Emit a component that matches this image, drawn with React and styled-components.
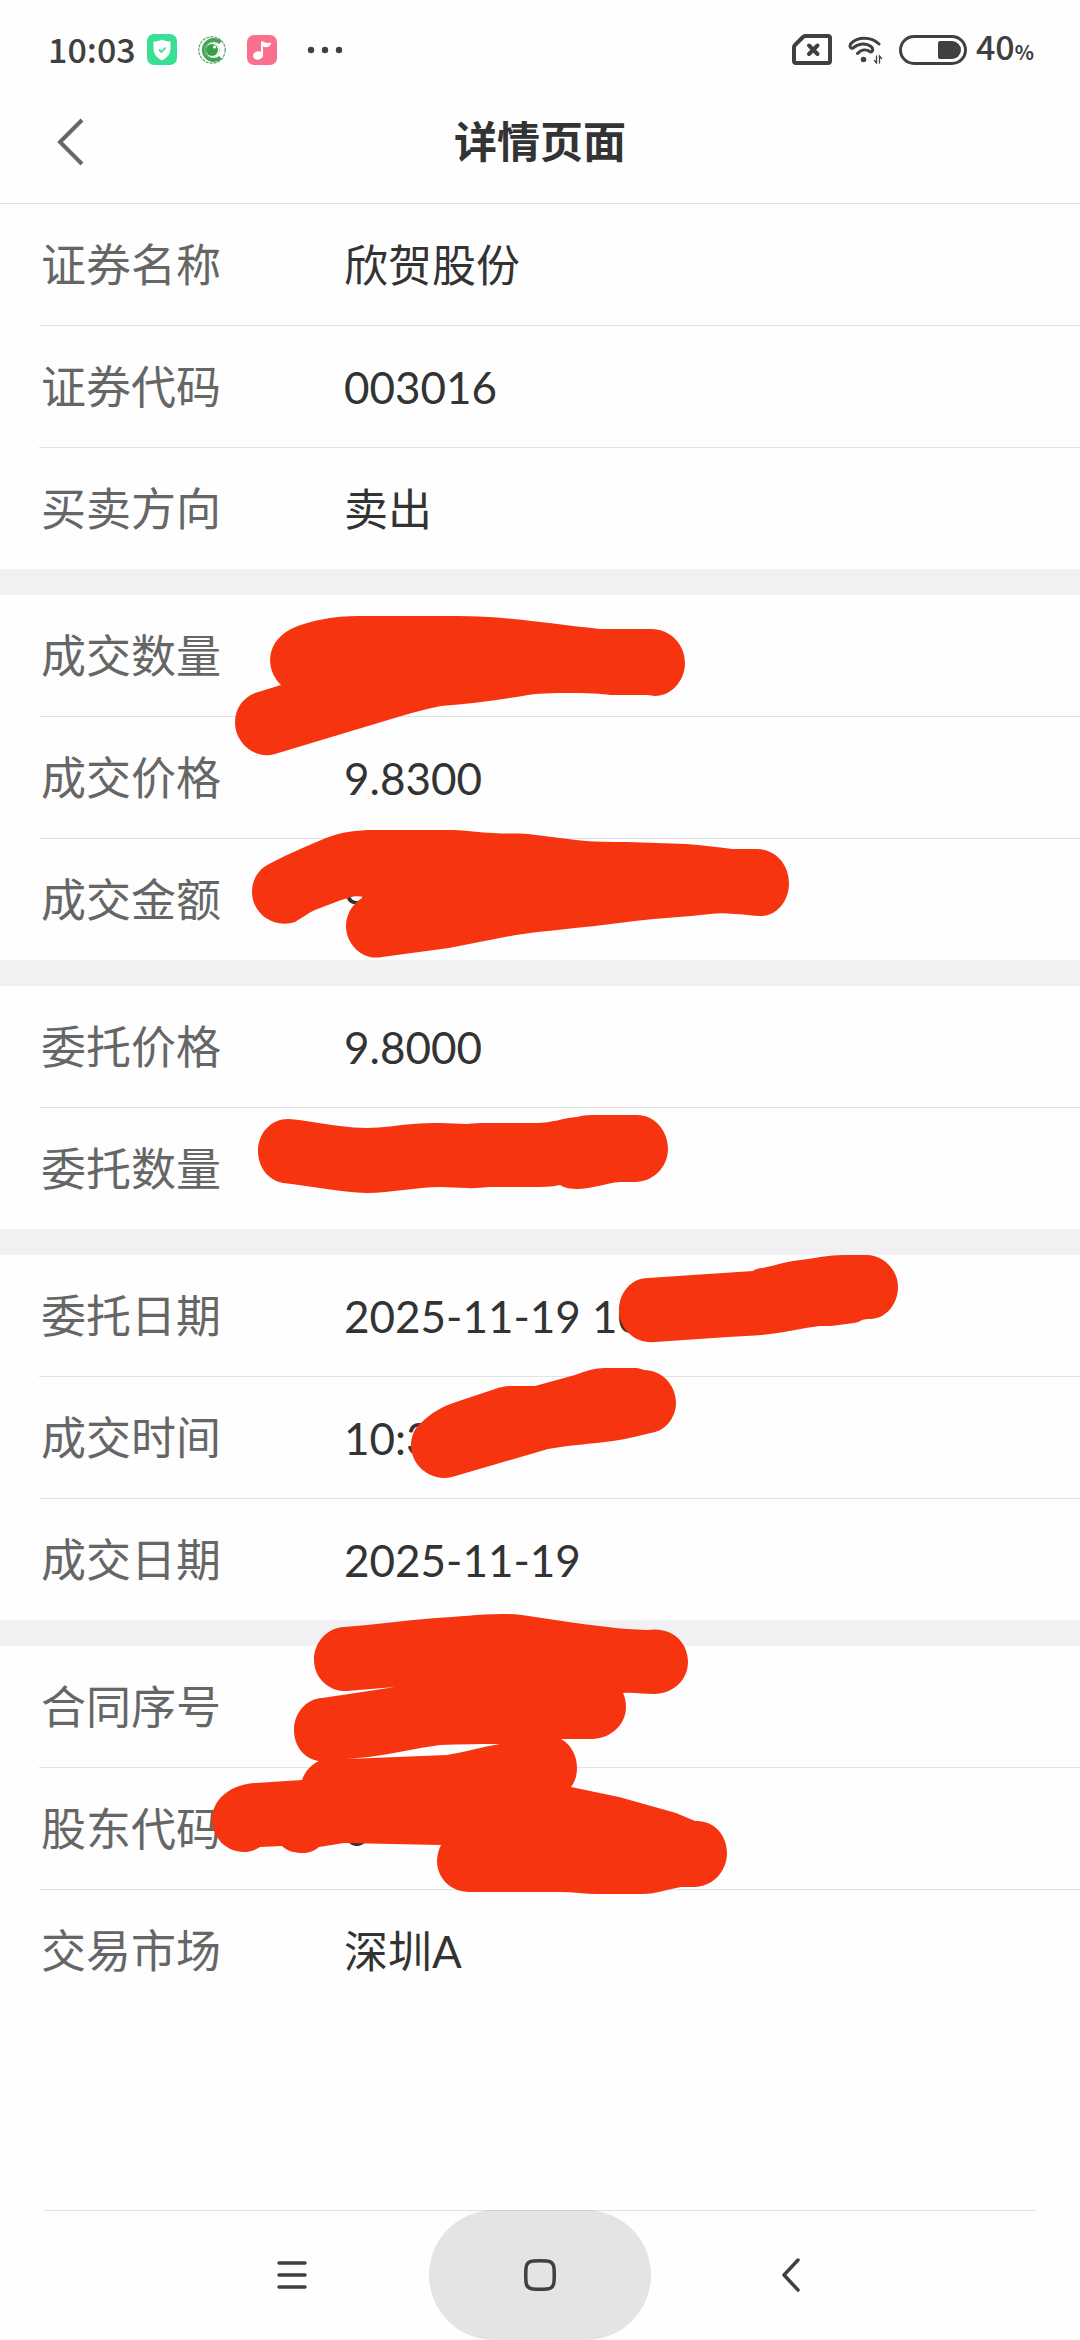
import React from "react";
import styled, { createGlobalStyle } from "styled-components";

const GlobalStyle = createGlobalStyle`
  * {
    box-sizing: border-box;
  }

  body {
    margin: 0;
    background: #fefefe;
    color: #333;
    font-family: Lato, "Noto Sans CJK SC", sans-serif;
  }

  button {
    border: none;
    background: none;
    padding: 0;
    color: inherit;
  }

  svg {
    display: block;
  }
`;

const Page = styled.div`
  min-height: 100vh;
  display: flex;
  flex-direction: column;
`;

const StatusBar = styled.div`
  height: 81px;
  padding: 18px 46px 0 48px;
  display: flex;
  align-items: center;
  justify-content: space-between;
  color: #404040;
`;

const StatusGroup = styled.div`
  display: flex;
  align-items: center;
  gap: ${(props) => props.$gap}px;
`;

const StatusText = styled.span`
  padding-bottom: 2px;
  font-family: "Noto Sans CJK SC", sans-serif;
  font-size: 34px;
  line-height: 40px;
  font-weight: 500;

  small {
    font-size: 20px;
    font-weight: 700;
  }
`;

const TitleBar = styled.header`
  height: 123px;
  padding: 0 42px;
  display: grid;
  grid-template-columns: 60px 1fr 60px;
  align-items: center;
  border-bottom: 1px solid #e2e2e2;

  h1 {
    margin: 0;
    font-size: 43px;
    line-height: 60px;
    font-weight: 700;
    text-align: center;
  }
`;

const BackButton = styled.button`
  width: 60px;
  height: 80px;
  display: flex;
  align-items: center;
  padding-left: 14px;
  color: #666;
`;

const Details = styled.main`
  position: relative;
`;

const Group = styled.dl`
  margin: 0;

  & + & {
    border-top: 26px solid #f1f1f4;
  }
`;

const Row = styled.div`
  height: 122px;
  margin-left: 39px;
  display: flex;
  align-items: center;
  border-bottom: 1px solid #e2e2e2;

  &:last-child {
    height: 121px;
    border-bottom: none;
  }

  dt {
    width: 305px;
    padding-left: 2px;
    font-size: 45px;
    line-height: 60px;
    color: #666;
  }

  dd {
    margin: 0;
    font-size: 44px;
    line-height: 60px;
  }
`;

// red marker strokes lying over the private values
const Marker = styled.svg`
  position: absolute;
  top: 0;
  left: 0;
  fill: #f63410;
  pointer-events: none;
`;

const NavBar = styled.nav`
  height: 130px;
  margin: auto 44px 0;
  display: flex;
  justify-content: center;
  gap: 26px;
  box-shadow: inset 0 1px #e2e2e2;
`;

const NavButton = styled.button`
  width: 222px;
  height: 130px;
  border-radius: 65px;
  display: flex;
  align-items: center;
  justify-content: center;
  color: #404040;
  background: ${(props) => (props.$active ? "rgba(0, 0, 0, 0.1)" : "none")};
`;

const groups = [
  [
    ["证券名称", "欣贺股份"],
    ["证券代码", "003016"],
    ["买卖方向", "卖出"],
  ],
  [
    ["成交数量", ""],
    ["成交价格", "9.8300"],
    ["成交金额", "9"],
  ],
  [
    ["委托价格", "9.8000"],
    ["委托数量", ""],
  ],
  [
    ["委托日期", "2025-11-19 10"],
    ["成交时间", "10:3"],
    ["成交日期", "2025-11-19"],
  ],
  [
    ["合同序号", ""],
    ["股东代码", "0"],
    ["交易市场", "深圳A"],
  ],
];

const strokes = [
  "M281 685C266 671 264 643 291 629C310 620 335 616 358 616H457C505 616 545 623 600 629H651C671 629 685 645 685 663C685 681 671 696 655 696L647 695H610C598 693 548 692 528 695C500 700 470 704 441 706C425 709 412 713 398 717L275 754C254 760 235 742 235 723C235 708 243 698 255 693Z",
  "M252 892C252 879 259 869 269 864C288 854 307 846 326 838C341 832 357 830 374 830H453C466 830 480 833 493 833C505 834 516 833 528 834L576 840C593 842 610 842 627 842C647 843 667 843 686 844C702 845 717 847 732 849H757C776 849 789 865 789 883C789 902 776 916 761 916C752 916 743 914 734 914C726 913 718 913 710 914C685 917 660 918 635 921L595 926C568 929 542 931 516 935C494 939 471 944 449 948L382 957C362 961 346 944 346 926C346 913 354 902 364 897C358 896 353 896 348 898C337 901 326 906 315 910C308 913 302 918 295 922C273 929 252 913 252 892Z",
  "M288 1119C305 1120 323 1124 340 1126C349 1127 358 1128 367 1128C382 1128 398 1125 413 1124C422 1123 431 1123 440 1123C449 1123 458 1124 467 1124C474 1123 480 1123 487 1123H537C551 1123 564 1118 577 1117C584 1115 590 1115 597 1115H637C655 1115 668 1131 668 1149C668 1167 653 1182 635 1182H620C606 1183 592 1189 577 1189C571 1189 565 1188 560 1185C551 1187 542 1187 533 1187H490C482 1187 475 1189 467 1188C458 1188 449 1187 440 1187C416 1187 391 1193 367 1193C339 1192 311 1186 283 1183C268 1180 258 1167 258 1151C258 1132 272 1119 288 1119Z",
  "M619 1310C619 1293 631 1278 648 1278L753 1271C755 1269 759 1268 763 1268C776 1265 788 1261 801 1260C815 1258 829 1255 843 1255H866C884 1255 898 1270 898 1287C898 1304 886 1319 870 1319C867 1319 865 1319 862 1320C859 1322 857 1322 854 1323L831 1326H820C803 1328 787 1332 770 1334C756 1336 742 1336 728 1337L655 1342C634 1344 619 1328 619 1310Z",
  "M411 1445C411 1436 415 1427 422 1422C431 1413 443 1406 456 1402L495 1389C501 1387 507 1386 514 1386H535L575 1375C585 1371 595 1368 605 1368H636C639 1368 641 1369 644 1370C662 1370 676 1385 676 1403C676 1416 667 1429 655 1432C641 1435 627 1439 613 1441C591 1444 569 1445 548 1449L452 1477C430 1482 411 1465 411 1445Z",
  "M314 1660C314 1642 327 1628 344 1627C375 1625 406 1620 436 1618C458 1617 479 1614 501 1614C508 1614 515 1614 522 1615C551 1619 579 1624 608 1627C621 1629 634 1629 647 1630C672 1626 688 1642 688 1662C688 1680 673 1694 654 1694C644 1694 633 1692 623 1693C625 1697 626 1702 626 1707C626 1725 610 1739 592 1739H561C571 1744 577 1756 577 1768C577 1775 575 1782 571 1787L619 1797L676 1813L695 1821C714 1820 727 1835 727 1853C727 1872 712 1887 694 1887H681C668 1889 657 1894 642 1894H597C585 1894 573 1892 561 1892H469C451 1892 437 1878 437 1861C437 1855 439 1849 441 1845L344 1843L319 1847C314 1851 309 1853 302 1853C295 1853 287 1851 282 1846L260 1847C255 1850 250 1852 244 1852C226 1852 212 1837 212 1820C212 1799 231 1784 256 1783L302 1780C305 1771 312 1764 319 1761C304 1759 294 1746 294 1730C294 1713 306 1699 322 1698C347 1694 371 1691 395 1687L347 1691C329 1692 314 1678 314 1660ZM347 1759L447 1755C465 1752 482 1747 500 1744C480 1744 460 1744 440 1745C416 1748 393 1754 369 1757Z",
];

function StatusLeftIcons() {
  return (
    <>
      <svg width="30" height="31" viewBox="0 0 30 31">
        <rect width="30" height="31" rx="7" fill="#39df94" />
        <path d="M15 5.500c2.500 1.500 5.500 2 8.500 2v7c0 5.500-3.500 9.500-8.500 12-5-2.500-8.500-6.500-8.500-12v-7c3 0 6-.5 8.500-2z" fill="#fff" />
        <path d="M12 15.500l2.500 2.500 4-4.500" fill="none" stroke="#39df94" strokeWidth="1.800" />
      </svg>
      <svg width="28" height="28" viewBox="0 0 28 28" fill="none">
        <circle cx="14" cy="14" r="13.200" stroke="#55a866" strokeWidth="1.200" strokeDasharray="3 1" />
        <path d="M22.500 6.500a10 10 0 1 0 0 15" stroke="#43a257" strokeWidth="4" />
        <circle cx="14" cy="14" r="7.500" stroke="#a9dab1" strokeDasharray="1.500 1" />
        <circle cx="14" cy="14" r="6" fill="#34a04c" />
        <circle cx="16.500" cy="11" r="1.600" fill="#fff" />
      </svg>
      <svg width="30" height="30" viewBox="0 0 30 30">
        <rect width="30" height="30" rx="7" fill="#fa6f8c" />
        <ellipse cx="11" cy="20.500" rx="5" ry="4.200" fill="#fff" transform="rotate(-15 11 20.500)" />
        <path d="M14 6.500c1-.5 2 0 3 .5 2 1 4.500 1 7.500.8-1 3-3 4.500-5.500 4.500-1 0-2-.4-3-1v9.500h-2z" fill="#fff" />
      </svg>
    </>
  );
}

function StatusRightIcons() {
  return (
    <>
      <svg width="40" height="31" viewBox="0 0 40 31" fill="none" stroke="currentColor">
        <path d="M13 2h23q2 0 2 2v23q0 2-2 2H4q-2 0-2-2V13q0-1 1-2l8-8q1-1 2-1z" strokeWidth="4" />
        <path d="M17 11.500l8.500 8.500M25.500 11.500L17 20" strokeWidth="4" strokeLinecap="round" />
      </svg>
      <svg width="35" height="28" viewBox="0 0 35 28" fill="none" stroke="currentColor" strokeLinecap="round">
        <path d="M31 8C23 .5 9.500.5 3 7.500c-2 2.500-.5 5.500 2 4.500 6-5 13.500-5 18-1.500 3 2.500 1.500 5.500-.5 5.500-4-3-9-3-13 1.500" strokeWidth="3" />
        <circle cx="15.500" cy="23.500" r="2.800" fill="currentColor" stroke="none" />
        <path d="M28.500 20v7l-2-2.500M31.500 27v-7l2 2.500" strokeWidth="1.300" />
      </svg>
      <svg width="68" height="30" viewBox="0 0 68 30">
        <rect x="1.500" y="1.500" width="65" height="27" rx="13.500" fill="none" stroke="currentColor" strokeWidth="3" />
        <path d="M41 6h12a9 9 0 0 1 0 18H41q-2 0-2-2V8q0-2 2-2z" fill="currentColor" />
      </svg>
    </>
  );
}

export default function App() {
  return (
    <Page>
      <GlobalStyle />
      <StatusBar>
        <StatusGroup $gap={20}>
          <StatusGroup $gap={11}>
            <StatusText>10:03</StatusText>
            <StatusGroup $gap={21}>
              <StatusLeftIcons />
            </StatusGroup>
          </StatusGroup>
          <svg width="56" height="8" viewBox="0 0 56 8" fill="currentColor">
            <circle cx="14" cy="4" r="3.200" />
            <circle cx="28" cy="4" r="3.200" />
            <circle cx="42" cy="4" r="3.200" />
          </svg>
        </StatusGroup>
        <StatusGroup $gap={9}>
          <StatusGroup $gap={16}>
            <StatusRightIcons />
          </StatusGroup>
          <StatusText>
            40<small>%</small>
          </StatusText>
        </StatusGroup>
      </StatusBar>

      <TitleBar>
        <BackButton aria-label="返回">
          <svg width="30" height="48" viewBox="0 0 30 48" fill="none" stroke="currentColor" strokeWidth="4">
            <path d="M26 2L4 24l22 22" />
          </svg>
        </BackButton>
        <h1>详情页面</h1>
      </TitleBar>

      <Details>
        {groups.map((rows) => (
          <Group key={rows[0][0]}>
            {rows.map(([label, value]) => (
              <Row key={label}>
                <dt>{label}</dt>
                <dd>{value}</dd>
              </Row>
            ))}
          </Group>
        ))}
        <Marker width="760" height="1720" viewBox="0 204 760 1720" overflow="visible" aria-hidden="true">
          {strokes.map((d) => (
            <path key={d} d={d} fillRule="evenodd" />
          ))}
        </Marker>
      </Details>

      <NavBar>
        <NavButton aria-label="菜单">
          <svg width="30" height="28" viewBox="0 0 30 28" stroke="currentColor" strokeWidth="3.500" strokeLinecap="round">
            <path d="M2 2h26M2 14h26M2 26h26" />
          </svg>
        </NavButton>
        <NavButton $active aria-label="主页">
          <svg width="32" height="32" viewBox="0 0 32 32" fill="none" stroke="currentColor" strokeWidth="3.500">
            <path d="M9 2Q16 1.500 23 2q6.500.5 7 7 .5 7 0 14-.5 6.500-7 7-7 .5-14 0-6.500-.5-7-7-.5-7 0-14 .5-6.500 7-7z" />
          </svg>
        </NavButton>
        <NavButton aria-label="返回上一页">
          <svg width="24" height="34" viewBox="0 0 24 34" fill="none" stroke="currentColor" strokeWidth="3.500" strokeLinecap="round" strokeLinejoin="round">
            <path d="M22 2L8 17l14 15" />
          </svg>
        </NavButton>
      </NavBar>
    </Page>
  );
}
